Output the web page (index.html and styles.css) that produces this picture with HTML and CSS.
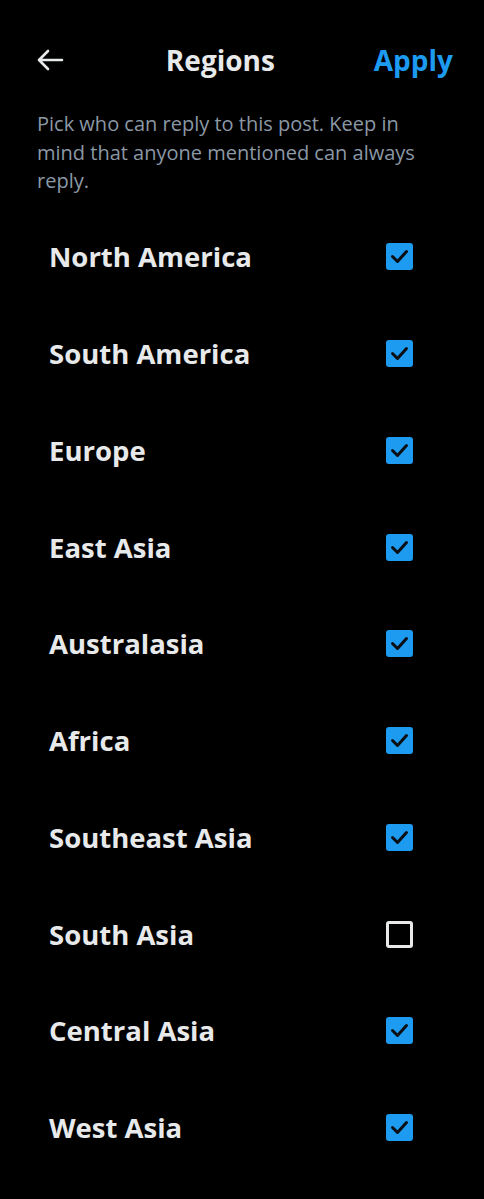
FILE: index.html
```html
<!DOCTYPE html>
<html lang="en">
<head>
<meta charset="UTF-8">
<meta name="viewport" content="width=device-width, initial-scale=1.0">
<title>Regions</title>
<link rel="stylesheet" href="styles.css">
</head>
<body>
<div class="screen">
  <div class="header">
    <div class="back">
      <svg width="28" height="24" viewBox="0 0 28 24">
        <path d="M26 12H3M12 3L3 12l9 9" fill="none" stroke="#e7e9ea" stroke-width="2.6" stroke-linecap="round" stroke-linejoin="round"/>
      </svg>
    </div>
    <div class="title">Regions</div>
    <div class="apply">Apply</div>
  </div>

  <p class="desc">Pick who can reply to this post. Keep in mind that anyone mentioned can always reply.</p>

  <div class="list">
    <div class="row"><span class="label">North America</span><span class="box checked"><svg viewBox="0 0 27 27"><path d="M6.5 13.5l5 5 9-10" /></svg></span></div>
    <div class="row"><span class="label">South America</span><span class="box checked"><svg viewBox="0 0 27 27"><path d="M6.5 13.5l5 5 9-10" /></svg></span></div>
    <div class="row"><span class="label">Europe</span><span class="box checked"><svg viewBox="0 0 27 27"><path d="M6.5 13.5l5 5 9-10" /></svg></span></div>
    <div class="row"><span class="label">East Asia</span><span class="box checked"><svg viewBox="0 0 27 27"><path d="M6.5 13.5l5 5 9-10" /></svg></span></div>
    <div class="row"><span class="label">Australasia</span><span class="box checked"><svg viewBox="0 0 27 27"><path d="M6.5 13.5l5 5 9-10" /></svg></span></div>
    <div class="row"><span class="label">Africa</span><span class="box checked"><svg viewBox="0 0 27 27"><path d="M6.5 13.5l5 5 9-10" /></svg></span></div>
    <div class="row"><span class="label">Southeast Asia</span><span class="box checked"><svg viewBox="0 0 27 27"><path d="M6.5 13.5l5 5 9-10" /></svg></span></div>
    <div class="row"><span class="label">South Asia</span><span class="box"></span></div>
    <div class="row"><span class="label">Central Asia</span><span class="box checked"><svg viewBox="0 0 27 27"><path d="M6.5 13.5l5 5 9-10" /></svg></span></div>
    <div class="row"><span class="label">West Asia</span><span class="box checked"><svg viewBox="0 0 27 27"><path d="M6.5 13.5l5 5 9-10" /></svg></span></div>
  </div>
</div>
</body>
</html>
```

FILE: styles.css
```css
body {
  margin: 0;
  background: #000;
  color: #e7e9ea;
  font-family: "Open Sans", "Liberation Sans", sans-serif;
}

.screen {
  width: 484px;
  min-height: 1199px;
}

.header {
  display: flex;
  align-items: center;
  height: 60px;
  padding: 30px 31px 0 36px;
}

.back {
  width: 28px;
  display: flex;
  align-items: center;
}

.title {
  flex: 1;
  text-align: center;
  font-size: 28px;
  font-weight: 700;
  color: #e7e9ea;
  padding-left: 3px;
}

.apply {
  font-size: 28px;
  font-weight: 700;
  color: #1d9bf0;
}

.desc {
  margin: 20px 37px 0 37px;
  font-size: 20px;
  line-height: 28.5px;
  color: #8b98a5;
}

.list {
  margin-top: 13px;
}

.row {
  display: flex;
  align-items: center;
  height: 96.75px;
  padding: 0 71px 0 49px;
}

.label {
  flex: 1;
  font-size: 27.5px;
  font-weight: 700;
  color: #e7e9ea;
}

.box {
  width: 27px;
  height: 27px;
  box-sizing: border-box;
  border: 3px solid #e7e9ea;
  border-radius: 3px;
}

.box.checked {
  border: none;
  background: #1d9bf0;
}

.box svg {
  display: block;
  width: 27px;
  height: 27px;
}

.box svg path {
  fill: none;
  stroke: #0b0f14;
  stroke-width: 3;
  stroke-linecap: round;
  stroke-linejoin: round;
}
```
